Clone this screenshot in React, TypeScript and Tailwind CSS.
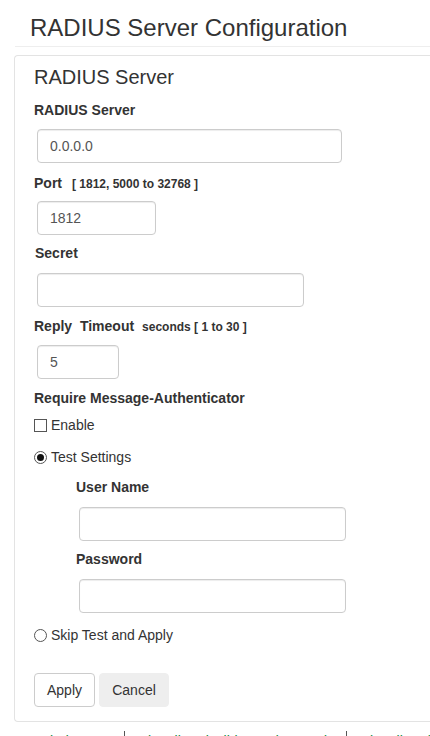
import React from "react";

function Label({ children, className = "" }: { children: React.ReactNode; className?: string }) {
  return <div className={`h-[20px] whitespace-nowrap text-[14px] font-bold leading-[20px] ${className}`}>{children}</div>;
}

function TextBox({ value = "", width, className = "" }: { value?: string; width: string; className?: string }) {
  return (
    <input
      type="text"
      readOnly
      value={value}
      className={`block h-[34px] rounded-[4px] border border-[#ccc] bg-white px-[12px] text-[14px] text-[#555] shadow-[inset_0_1px_1px_rgba(0,0,0,0.075)] outline-none ${width} ${className}`}
    />
  );
}

function Radio({ checked }: { checked?: boolean }) {
  return (
    <span className="flex h-[13px] w-[13px] shrink-0 items-center justify-center rounded-full border border-[#555] bg-white">
      {checked ? <span className="h-[7px] w-[7px] rounded-full bg-[#111]" /> : null}
    </span>
  );
}

export default function App() {
  return (
    <div className="h-screen overflow-hidden bg-white font-['Liberation_Sans',Arial,sans-serif] text-[#333]">
      <div className="pl-[14px]">
        <div className="ml-px border-b border-[#eee] pb-[5px] pl-[15px] pt-[15px]">
          <h1 className="whitespace-nowrap text-[24px] leading-[26px]">RADIUS Server Configuration</h1>
        </div>

        <div className="mt-[8px] rounded-l-[4px] border border-r-0 border-[#e3e3e3] pb-[14px] pl-[19px] pt-[10px]">
          <h2 className="text-[20px] leading-[22px]">RADIUS Server</h2>

          <Label className="mt-[12px]">RADIUS Server</Label>
          <TextBox value="0.0.0.0" width="w-[305px]" className="ml-[3px] mt-[9px]" />

          <Label className="mt-[10px]">
            Port
            <span className="ml-[10px] text-[12px] leading-none">[ 1812, 5000 to 32768 ]</span>
          </Label>
          <TextBox value="1812" width="w-[119px]" className="ml-[3px] mt-[8px]" />

          <Label className="ml-px mt-[8px]">Secret</Label>
          <TextBox width="w-[267px]" className="ml-[3px] mt-[10px]" />

          <Label className="mt-[9px]">
            Reply&nbsp; Timeout
            <span className="ml-[8px] text-[12px] leading-none">seconds [ 1 to 30 ]</span>
          </Label>
          <TextBox value="5" width="w-[82px]" className="ml-[3px] mt-[9px]" />

          <Label className="mt-[9px]">Require Message-Authenticator</Label>
          <div className="mt-[7px] flex h-[20px] items-center gap-[4px] text-[14px]">
            <span className="h-[13px] w-[13px] shrink-0 border border-[#555] bg-white" />
            <span>Enable</span>
          </div>

          <div className="mt-[12px] flex h-[20px] items-center gap-[4px] text-[14px]">
            <Radio checked />
            <span>Test Settings</span>
          </div>

          <div className="pl-[42px]">
            <Label className="mt-[10px]">User Name</Label>
            <TextBox width="w-[267px]" className="ml-[3px] mt-[10px]" />
            <Label className="mt-[8px]">Password</Label>
            <TextBox width="w-[267px]" className="ml-[3px] mt-[10px]" />
          </div>

          <div className="mt-[12px] flex h-[20px] items-center gap-[4px] text-[14px]">
            <Radio />
            <span>Skip Test and Apply</span>
          </div>

          <div className="mt-[28px] flex gap-[4px]">
            <button
              type="button"
              className="h-[34px] w-[61px] rounded-[4px] border border-[#ccc] bg-white text-[14px] text-[#333]"
            >
              Apply
            </button>
            <button
              type="button"
              className="h-[34px] w-[70px] rounded-[4px] border border-[#eee] bg-[#eee] text-[14px] text-[#333]"
            >
              Cancel
            </button>
          </div>
        </div>

        <div className="ml-px mt-[9px] flex whitespace-nowrap text-[14px] leading-[20px] text-[#0b8a42]">
          <span className="w-[109px] shrink-0 overflow-hidden">Knowledge Base</span>
          <span className="w-[222px] shrink-0 overflow-hidden border-l border-[#555] pl-[6px]">
            Subscribe Flexible Product Code
          </span>
          <span className="border-l border-[#555] pl-[6px]">Subscribe Flexible Product Code</span>
        </div>
      </div>
    </div>
  );
}
